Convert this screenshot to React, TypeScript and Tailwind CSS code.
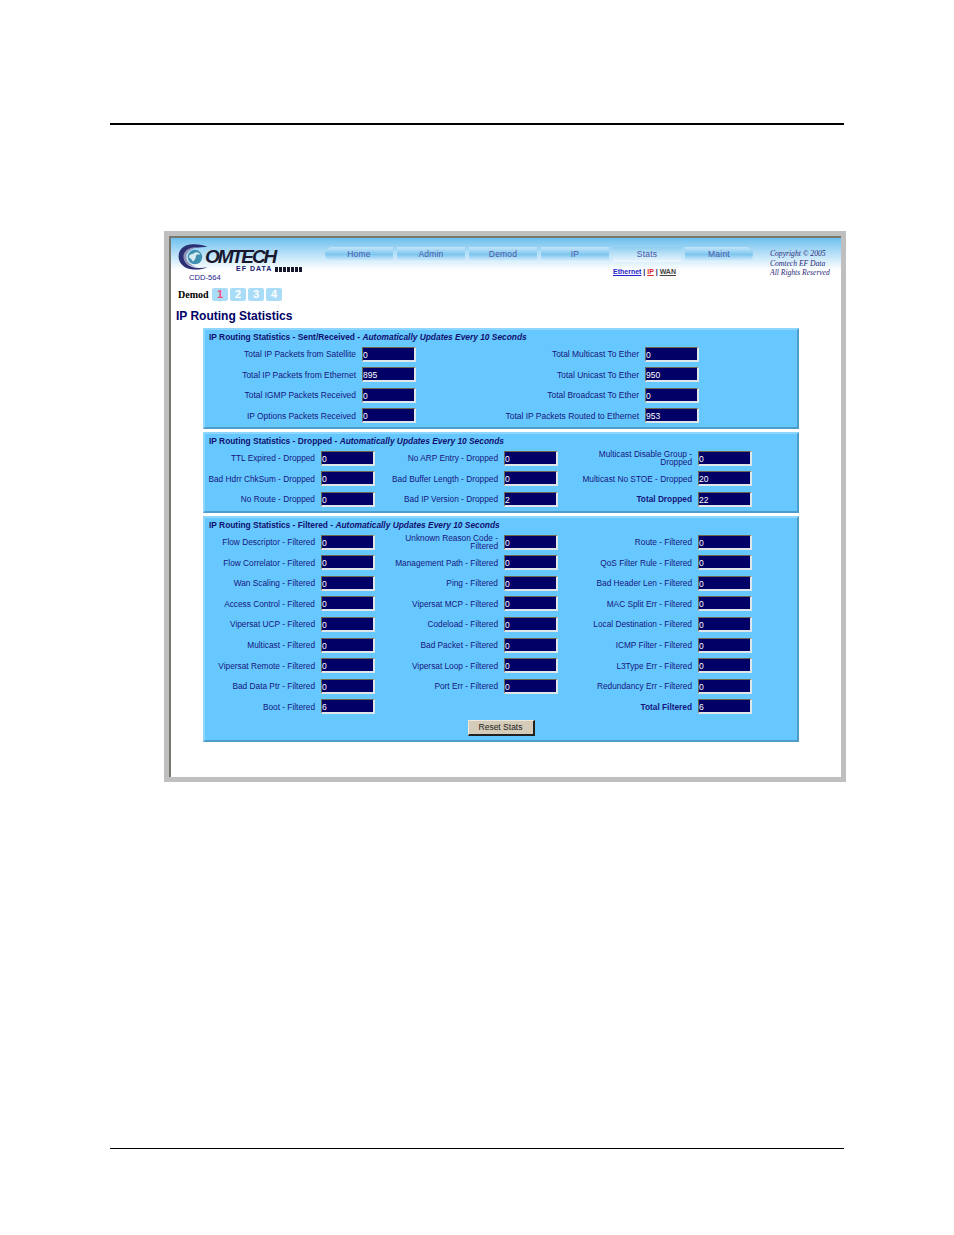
const sentLeft = [
  ['Total IP Packets from Satellite', '0'],
  ['Total IP Packets from Ethernet', '895'],
  ['Total IGMP Packets Received', '0'],
  ['IP Options Packets Received', '0'],
];
const sentRight = [
  ['Total Multicast To Ether', '0'],
  ['Total Unicast To Ether', '950'],
  ['Total Broadcast To Ether', '0'],
  ['Total IP Packets Routed to Ethernet', '953'],
];
const dropped = [
  ['TTL Expired - Dropped', '0'], ['No ARP Entry - Dropped', '0'], ['Multicast Disable Group -\nDropped', '0'],
  ['Bad Hdrr ChkSum - Dropped', '0'], ['Bad Buffer Length - Dropped', '0'], ['Multicast No STOE - Dropped', '20'],
  ['No Route - Dropped', '0'], ['Bad IP Version - Dropped', '2'], ['Total Dropped', '22'],
];
const filtered = [
  ['Flow Descriptor - Filtered', '0'], ['Unknown Reason Code -\nFiltered', '0'], ['Route - Filtered', '0'],
  ['Flow Correlator - Filtered', '0'], ['Management Path - Filtered', '0'], ['QoS Filter Rule - Filtered', '0'],
  ['Wan Scaling - Filtered', '0'], ['Ping - Filtered', '0'], ['Bad Header Len - Filtered', '0'],
  ['Access Control - Filtered', '0'], ['Vipersat MCP - Filtered', '0'], ['MAC Split Err - Filtered', '0'],
  ['Vipersat UCP - Filtered', '0'], ['Codeload - Filtered', '0'], ['Local Destination - Filtered', '0'],
  ['Multicast - Filtered', '0'], ['Bad Packet - Filtered', '0'], ['ICMP Filter - Filtered', '0'],
  ['Vipersat Remote - Filtered', '0'], ['Vipersat Loop - Filtered', '0'], ['L3Type Err - Filtered', '0'],
  ['Bad Data Ptr - Filtered', '0'], ['Port Err - Filtered', '0'], ['Redundancy Err - Filtered', '0'],
  ['Boot - Filtered', '6'], ['', ''], ['Total Filtered', '6'],
];
const tabs = ['Home', 'Admin', 'Demod', 'IP', 'Stats', 'Maint'];

function Stat({ label, value }: { label: string; value: string }) {
  const total = label.startsWith('Total Dropped') || label.startsWith('Total Filtered');
  return (
    <>
      <div className={`justify-self-end self-center whitespace-pre pr-[6px] text-right leading-[8px] ${total ? 'font-bold' : ''}`}>{label}</div>
      {label ? (
        <div className="h-[15px] w-[54px] self-center border border-b-2 border-r-2 border-t-[#6f6650] border-l-[#6f6650] border-r-[#dfe6ea] border-b-[#dfe6ea] bg-[#000066] text-[8.500px] leading-[14px] text-white">
          {value}
        </div>
      ) : (
        <div />
      )}
    </>
  );
}

function Panel({ title, children }: { title: string; children: React.ReactNode }) {
  return (
    <section className="border-2 border-t-[#8ed6ff] border-l-[#8ed6ff] border-r-[#4d9cc9] border-b-[#4d9cc9] bg-[#66c8ff] pl-[4px] text-[8.300px] text-[#16167c]">
      <h2 className="h-[14px] text-[8.400px] font-bold leading-[14px] text-[#10106e]">
        IP Routing Statistics - {title} - <i>Automatically Updates Every 10 Seconds</i>
      </h2>
      {children}
    </section>
  );
}

function Logo() {
  return (
    <div className="relative h-[30px] w-[124px]">
      <svg viewBox="0 0 32 28" className="absolute left-0 top-0 h-[27px] w-[32px]">
        <path d="M30 3C25 .5 18 -.3 12 .5 4.500 1.500 0 6.500 0 13c0 7 6 13 15 13.500 6 .3 11-.5 15-2.500-5 1-11 1.200-15 0C9 22.500 5.500 18.500 6 13 6.500 8 11 4.500 17 3.800 22 3.200 26 3 30 3Z" fill="#2b2f73" />
        <path d="M5 13C5 8 9.500 4 15 3.500l4-.2C13 5 8 8 8 13s4 9 10 10.500C10 23.500 5 19 5 13Z" fill="#8d93b8" />
        <circle cx="17" cy="13.500" r="7.500" fill="#3e8fb0" />
        <path d="M11 12c2-2 4-1.500 5-2.500s4-1.500 6.500 1c-1 1-3 0-4 1s0 3-2 5-1 2-2 1-1-2-3-3 0-1.500-.5-2.500Z" fill="#d6eaf1" />
      </svg>
      <div className="absolute left-[27px] top-[3px] font-['Liberation_Sans',sans-serif] text-[19px] font-bold italic leading-[20px] tracking-[-2px] text-[#17172e]">
        OMTECH
      </div>
      <div className="absolute left-[58px] top-[21px] flex items-center gap-[3px] whitespace-nowrap">
        <span className="font-['Liberation_Sans',sans-serif] text-[7px] font-bold leading-[8px] tracking-[1px] text-[#20206e]">EF DATA</span>
        <span className="h-[5px] w-[27px] bg-[repeating-linear-gradient(90deg,#17172e_0,#17172e_3px,#ffffff_3px,#ffffff_4px)]" />
      </div>
    </div>
  );
}

export default function App() {
  return (
    <div className="min-h-[1235px] bg-white px-[110px] pt-[123px] font-['Liberation_Sans',Arial,sans-serif]">
      <div className="h-[2px] bg-black" />

      <div className="ml-[54px] mr-0 mt-[106px] h-[551px] w-[682px] border-[5px] border-[#bfbfbf] bg-white">
        <div className="h-full border-l-2 border-t-2 border-l-[#77766f] border-t-[#77766f]">
          <div className="h-[32px] bg-gradient-to-b from-[#6cc0ee] to-white" />
          <div className="-mt-[32px] flex h-[49px] items-start">
            <div className="ml-[7px] mt-[6px] w-[147px]">
              <Logo />
              <div className="ml-[11px] mt-[-1px] text-[7.600px] leading-[10px] text-[#1c1c8a]">CDD-564</div>
            </div>
            <div className="w-[428px]">
              <nav className="mt-[9px] flex h-[15px] gap-[4px]">
                {tabs.map((t, i) => (
                  <div
                    key={t}
                    className={`flex h-[15px] w-[68px] items-center justify-center bg-gradient-to-b text-[8.500px] tracking-[0.2px] text-[#4a58a6] ${
                      t === 'Stats' ? 'from-[#8ccdf0] to-[#eef8fd]' : 'from-[#c4e6f9] via-[#7cc6ef] to-[#e6f5fd]'
                    } ${i === 0 ? 'rounded-l-full' : ''} ${i === 5 ? 'rounded-r-full' : ''}`}
                  >
                    {t}
                  </div>
                ))}
              </nav>
              <div className="mt-[5px] pl-[288px] text-[7px] font-bold leading-[10px] text-[#11116b]">
                <span className="text-[#2222cc] underline">Ethernet</span> | <span className="text-[#e3242b] underline">IP</span> | <span className="text-[#444444] underline">WAN</span>
              </div>
            </div>
            <div className="ml-[17px] mt-[11px] font-['Liberation_Serif',serif] text-[7.600px] italic leading-[9.500px] text-[#2b2b7a]">
              Copyright © 2005<br />Comtech EF Data<br />All Rights Reserved
            </div>
          </div>

          <div className="ml-[7px] flex h-[14px] items-center">
            <span className="w-[34px] font-['Liberation_Serif',serif] text-[10px] font-bold text-black">Demod</span>
            {['1', '2', '3', '4'].map((n, i) => (
              <span
                key={n}
                className={`mr-[2px] flex h-[13px] w-[16px] items-center justify-center rounded-[2px] bg-[#a9dcf6] text-[11px] font-bold leading-none ${i === 0 ? 'text-[#f0507f]' : 'text-white'}`}
              >
                {n}
              </span>
            ))}
          </div>

          <h1 className="ml-[5px] mt-[6px] h-[18px] text-[12px] font-bold leading-[18px] text-[#000066]">IP Routing Statistics</h1>

          <div className="ml-[32px] mt-[3px] flex w-[596px] flex-col gap-[3px]">
            <Panel title="Sent/Received">
              <div className="mb-[1px] grid grid-cols-[153px_54px_229px_54px] auto-rows-[20.500px] text-[8.450px]">
                {sentLeft.map((row, i) => (
                  <Stat2 key={row[0]} left={row} right={sentRight[i]} />
                ))}
              </div>
            </Panel>
            <Panel title="Dropped">
              <div className="mb-[1px] grid grid-cols-[112px_54px_129px_54px_140px_54px] auto-rows-[20.600px]">
                {dropped.map((row) => (
                  <Stat key={row[0]} label={row[0]} value={row[1]} />
                ))}
              </div>
            </Panel>
            <Panel title="Filtered">
              <div className="grid grid-cols-[112px_54px_129px_54px_140px_54px] auto-rows-[20.600px]">
                {filtered.map((row, i) => (
                  <Stat key={i} label={row[0]} value={row[1]} />
                ))}
              </div>
              <div className="mb-[4px] mt-[3px] flex justify-center pr-[4px]">
                <button className="h-[16px] w-[67px] border border-b-2 border-r-2 border-t-[#eee8dc] border-l-[#eee8dc] border-r-[#222222] border-b-[#222222] bg-[#d4cbb8] text-[8.500px] leading-none text-[#222222]">
                  Reset Stats
                </button>
              </div>
            </Panel>
          </div>
        </div>
      </div>

      <div className="mt-[366px] h-px bg-black" />
    </div>
  );
}

function Stat2({ left, right }: { left: string[]; right: string[] }) {
  return (
    <>
      <Stat label={left[0]} value={left[1]} />
      <Stat label={right[0]} value={right[1]} />
    </>
  );
}
